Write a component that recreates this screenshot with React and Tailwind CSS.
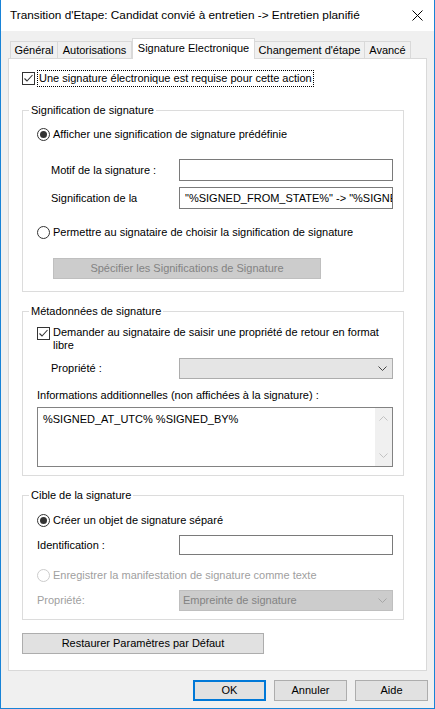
import React from "react";

function Check() {
  return (
    <span className="shrink-0 w-[13px] h-[13px] border border-[#333333] bg-white flex items-center justify-center">
      <svg width="11" height="11" viewBox="0 0 11 11">
        <path d="M1.5 5.5 L4 8 L9.5 2" fill="none" stroke="#333333" strokeWidth="1.1" />
      </svg>
    </span>
  );
}

function Radio({ checked, disabled }) {
  return (
    <span className={"shrink-0 w-[13px] h-[13px] rounded-full border bg-white flex items-center justify-center " + (disabled ? "border-[#cccccc]" : "border-[#333333]")}>
      {checked && <span className="w-[7px] h-[7px] rounded-full bg-[#333333]" />}
    </span>
  );
}

function Chevron({ color }) {
  return (
    <svg width="9" height="5" viewBox="0 0 9 5">
      <path d="M0.5 0.5 L4.5 4.5 L8.5 0.5" fill="none" stroke={color} strokeWidth="1" />
    </svg>
  );
}

function Tab({ label, w, active, first }) {
  if (active) {
    return (
      <div className={"relative z-10 h-[21px] -mb-px bg-white border-x border-t border-[#d9d9d9] flex items-center justify-center whitespace-nowrap pb-[2px] " + w}>
        {label}
      </div>
    );
  }
  return (
    <div className={"h-[17px] border-x border-t border-[#d9d9d9] bg-[#f0f0f0] flex items-center justify-center whitespace-nowrap " + w + (first ? "" : " -ml-px")}>
      {label}
    </div>
  );
}

function Button({ children, w, primary, disabled, extra = "" }) {
  return (
    <div
      className={
        "h-[21px] flex items-center justify-center whitespace-nowrap " +
        w +
        " " +
        (primary
          ? "border-2 border-[#0078d7] bg-[#e1e1e1]"
          : disabled
          ? "border border-[#bfbfbf] bg-[#cccccc] text-[#838383]"
          : "border border-[#adadad] bg-[#e1e1e1]") +
        " " +
        extra
      }
    >
      {children}
    </div>
  );
}

function Group({ title, h, mt, children }) {
  return (
    <fieldset className={"ml-[13px] w-[382px] border border-[#dcdcdc] " + h + " " + mt}>
      <legend className="ml-[6px] px-[2px] leading-[16px]">{title}</legend>
      {children}
    </fieldset>
  );
}

export default function App() {
  return (
    <div className="w-[435px] h-[709px] border-x border-b border-[#1883d7] bg-[#f0f0f0] flex flex-col font-['Liberation_Sans',Arial,sans-serif] text-[11px] text-black overflow-hidden select-none">
      {/* Title bar */}
      <div className="h-[31px] shrink-0 bg-white flex items-center justify-between pl-[9px] pr-[11px] text-[11.8px]">
        <span className="whitespace-nowrap">Transition d'Etape: Candidat convié à entretien -&gt; Entretien planifié</span>
        <svg width="11" height="11" viewBox="0 0 11 11">
          <path d="M0.5 0.5 L10.5 10.5 M10.5 0.5 L0.5 10.5" stroke="#000" strokeWidth="1" />
        </svg>
      </div>

      {/* Tabs */}
      <div className="mt-[7px] ml-[9px] h-[20px] flex items-end">
        <Tab label="Général" w="w-[48px]" first />
        <Tab label="Autorisations" w="w-[75px]" />
        <Tab label="Signature Electronique" w="w-[123px]" active />
        <Tab label="Changement d'étape" w="w-[111px]" />
        <Tab label="Avancé" w="w-[47px]" />
      </div>

      {/* Panel */}
      <div className="ml-[7px] w-[419px] h-[613px] bg-white border border-[#d9d9d9] flex flex-col">
        <div className="mt-[11px] ml-[13px] flex items-center h-[17px]">
          <Check />
          <span className="ml-[2px] border border-dotted border-black px-[1px] leading-[15px] whitespace-nowrap">
            Une signature électronique est requise pour cette action
          </span>
        </div>

        {/* Group 1 */}
        <Group title="Signification de signature" h="h-[190px]" mt="mt-[15px]">
          <div className="mt-[8px] ml-[14px] h-[16px] flex items-center gap-[3px]">
            <Radio checked />
            <span>Afficher une signification de signature prédéfinie</span>
          </div>
          <div className="mt-[17px] flex items-center">
            <span className="ml-[28px] w-[128px]">Motif de la signature :</span>
            <div className="w-[214px] h-[22px] border border-[#7a7a7a] bg-white" />
          </div>
          <div className="mt-[6px] flex items-center">
            <span className="ml-[28px] w-[128px]">Signification de la</span>
            <div className="w-[214px] h-[22px] border border-[#7a7a7a] bg-white overflow-hidden whitespace-nowrap pl-[5px] leading-[20px]">
              "%SIGNED_FROM_STATE%" -&gt; "%SIGNED_TO_STATE%"
            </div>
          </div>
          <div className="mt-[15px] ml-[14px] h-[16px] flex items-center gap-[3px]">
            <Radio />
            <span>Permettre au signataire de choisir la signification de signature</span>
          </div>
          <Button w="w-[268px]" disabled extra="mt-[18px] ml-[30px]">
            Spécifier les Significations de Signature
          </Button>
        </Group>

        {/* Group 2 */}
        <Group title="Métadonnées de signature" h="h-[173px]" mt="mt-[11px]">
          <div className="mt-[7px] ml-[14px] flex items-start gap-[3px]">
            <span className="mt-[1px]">
              <Check />
            </span>
            <span className="leading-[13px] whitespace-nowrap">
              Demander au signataire de saisir une propriété de retour en format
              <br />
              libre
            </span>
          </div>
          <div className="mt-[6px] flex items-center">
            <span className="ml-[28px] w-[128px]">Propriété :</span>
            <div className="w-[214px] h-[21px] border border-[#adadad] bg-[#e5e5e5] flex items-center justify-end pr-[5px]">
              <Chevron color="#444444" />
            </div>
          </div>
          <div className="mt-[8px] ml-[14px] leading-[16px]">Informations additionnelles (non affichées à la signature) :</div>
          <div className="mt-[4px] ml-[14px] w-[356px] h-[60px] border border-[#828282] bg-white flex">
            <div className="flex-1 pl-[5px] pt-[3px] leading-[16px]">%SIGNED_AT_UTC% %SIGNED_BY%</div>
            <div className="w-[17px] bg-[#f0f0f0] flex flex-col items-center justify-between py-[8px]">
              <svg width="9" height="5" viewBox="0 0 9 5">
                <path d="M0.5 4.5 L4.5 0.5 L8.5 4.5" fill="none" stroke="#c2c2c2" strokeWidth="1" />
              </svg>
              <Chevron color="#c2c2c2" />
            </div>
          </div>
        </Group>

        {/* Group 3 */}
        <Group title="Cible de la signature" h="h-[133px]" mt="mt-[11px]">
          <div className="mt-[9px] ml-[14px] h-[16px] flex items-center gap-[3px]">
            <Radio checked />
            <span>Créer un objet de signature séparé</span>
          </div>
          <div className="mt-[7px] flex items-center">
            <span className="ml-[14px] w-[142px]">Identification :</span>
            <div className="w-[214px] h-[20px] border border-[#7a7a7a] bg-white" />
          </div>
          <div className="mt-[12px] ml-[14px] h-[16px] flex items-center gap-[3px] text-[#a0a0a0]">
            <Radio disabled />
            <span>Enregistrer la manifestation de signature comme texte</span>
          </div>
          <div className="mt-[7px] flex items-center">
            <span className="ml-[14px] w-[142px] text-[#a0a0a0]">Propriété:</span>
            <div className="w-[214px] h-[21px] border border-[#bfbfbf] bg-[#cccccc] flex items-center justify-between pl-[3px] pr-[5px] text-[#838383]">
              <span>Empreinte de signature</span>
              <Chevron color="#a6a6a6" />
            </div>
          </div>
        </Group>

        <Button w="w-[242px]" extra="mt-[13px] ml-[13px]">
          Restaurer Paramètres par Défaut
        </Button>
      </div>

      {/* Bottom buttons */}
      <div className="mt-[9px] flex justify-end gap-[8px] pr-[6px]">
        <Button w="w-[73px]" primary>OK</Button>
        <Button w="w-[73px]">Annuler</Button>
        <Button w="w-[73px]">Aide</Button>
      </div>
    </div>
  );
}
